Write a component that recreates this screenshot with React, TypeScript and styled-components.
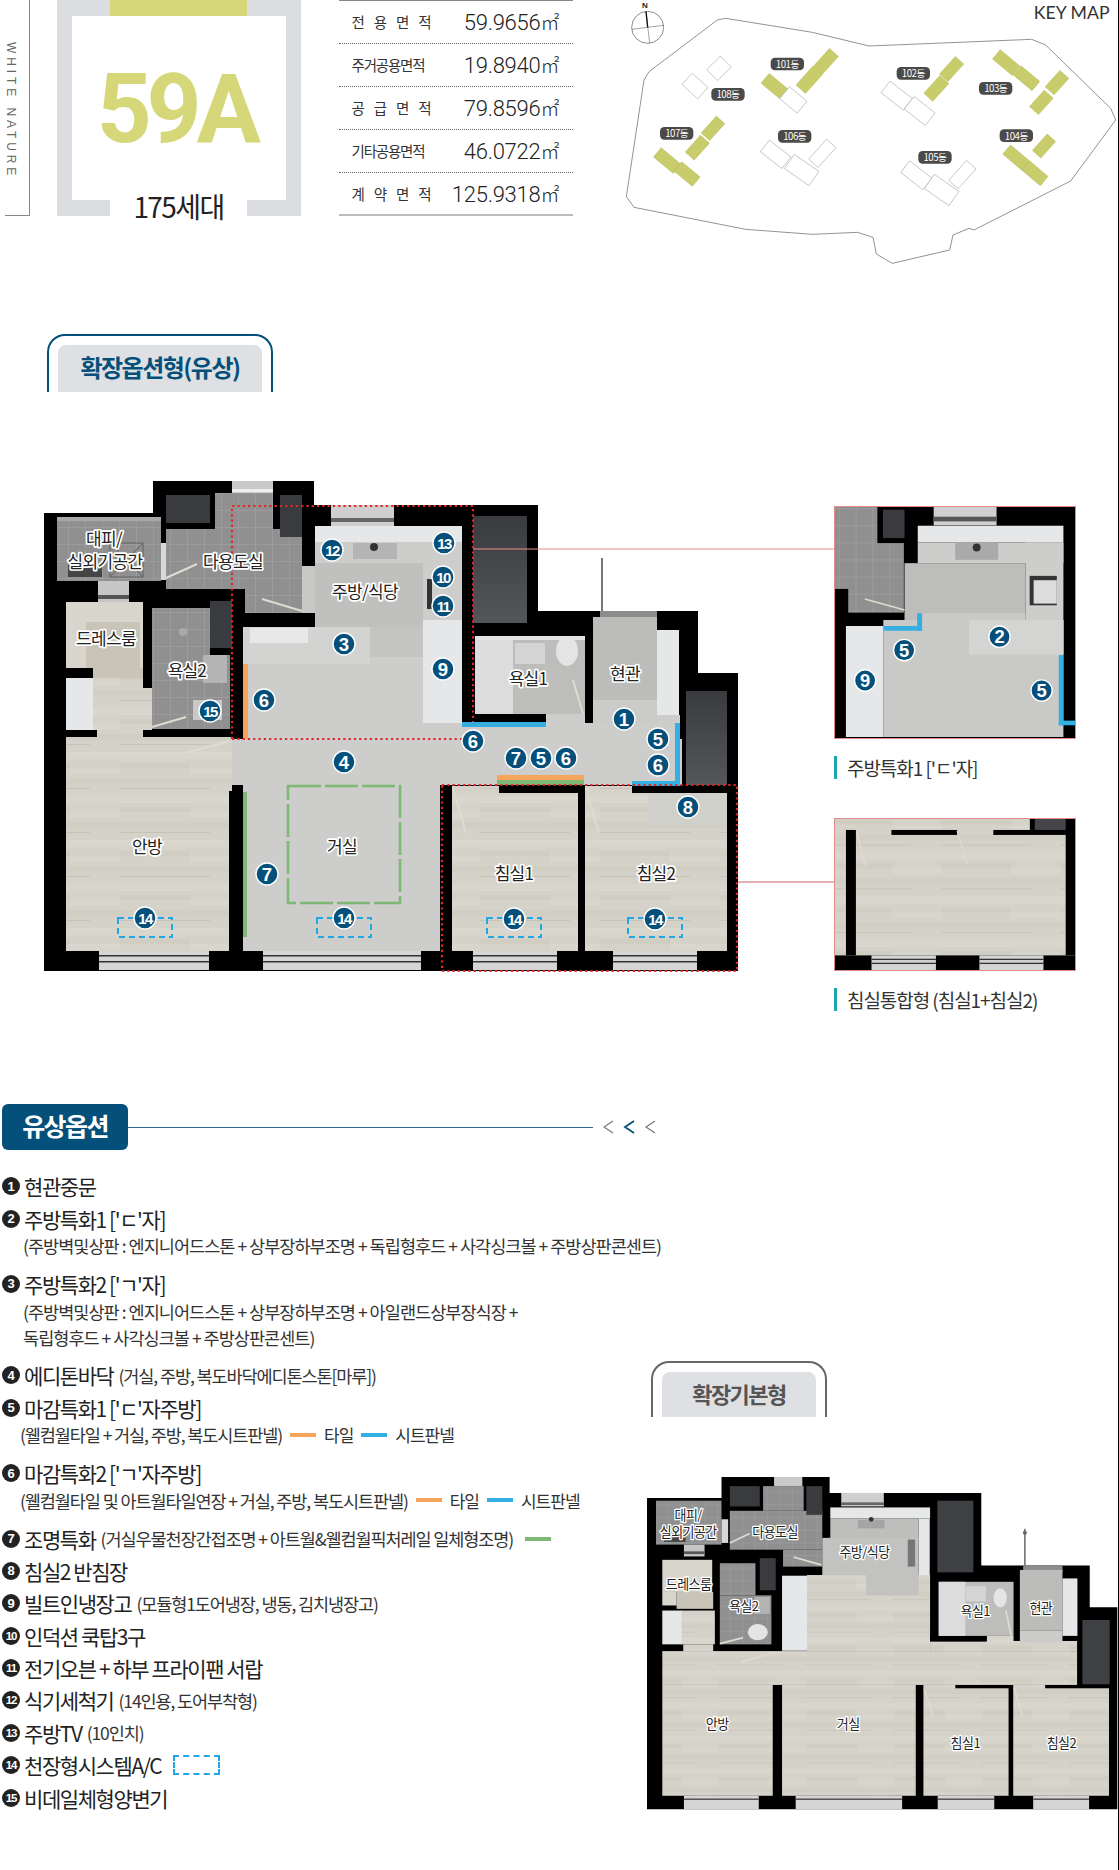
import React, { FunctionComponent } from 'react';
import styled, { createGlobalStyle } from 'styled-components';

const KR = '"Noto Sans CJK KR", "Noto Sans", sans-serif';
const NAVY = '#05507b';
const OLIVE = '#d5d778';
const BLUE = '#35aee2';
const ORANGE = '#f5a45c';
const GREEN = '#7db875';

const GlobalStyle = createGlobalStyle`
  html, body {
    margin: 0;
    padding: 0;
    background: #fff;
  }
  body {
    font-family: ${KR};
    color: #222;
  }
`;

const Page = styled.div`
  position: relative;
  box-sizing: border-box;
  width: 1119px;
  height: 1870px;
  overflow: hidden;
  border-right: 1px solid #000;
  background: #fff;
`;

/* ---------- top row ---------- */

const TopRow = styled.header`
  display: flex;
  height: 216px;
`;

const SideLabel = styled.div`
  box-sizing: border-box;
  width: 25px;
  height: 216px;
  margin-left: 5px;
  padding: 42px 11px 0 0;
  border-right: 1px solid #888;
  border-bottom: 1px solid #888;
  font-family: 'Liberation Sans', sans-serif;
  font-size: 12px;
  line-height: 14px;
  letter-spacing: 3.9px;
  color: #666;
  writing-mode: vertical-rl;
  white-space: nowrap;
`;

const TypeBox = styled.div`
  position: relative;
  box-sizing: border-box;
  display: flex;
  align-items: center;
  justify-content: center;
  width: 244px;
  height: 216px;
  margin-left: 27px;
  border: solid #dcdde0;
  border-width: 16px 15px;
`;

const TopNotch = styled.span`
  position: absolute;
  top: -16px;
  left: 38px;
  width: 137px;
  height: 16px;
  background: ${OLIVE};
`;

const Units = styled.span`
  position: absolute;
  bottom: -16px;
  left: 38px;
  width: 137px;
  height: 28px;
  background: #fff;
  font-size: 28px;
  line-height: 36px;
  letter-spacing: -1.6px;
  text-align: center;
  color: #222;
`;

const TypeName = styled.div`
  margin-top: 2px;
  margin-left: -5px;
  font-family: Roboto, sans-serif;
  font-size: 96px;
  font-weight: 700;
  line-height: 96px;
  letter-spacing: -5.2px;
  color: ${OLIVE};
`;

const AreaTable = styled.div`
  box-sizing: border-box;
  width: 235px;
  height: 216px;
  margin-left: 38px;
  border-top: 1px solid #888;
  border-bottom: 2px solid #bbb;
`;

const AreaRow = styled.div`
  box-sizing: border-box;
  display: flex;
  align-items: center;
  justify-content: space-between;
  height: 43px;
  padding: 0 15px 2px 13px;
  border-bottom: 1px dotted #666;
  &:last-child {
    border-bottom: 0;
  }
`;

const AreaLabel = styled.span<{ $spread?: boolean }>`
  width: 80px;
  font-size: 14.5px;
  letter-spacing: ${(p) => (p.$spread ? '0' : '-1.2px')};
  color: #333;
  white-space: nowrap;
  text-align: justify;
  text-align-last: justify;
`;

const AreaValue = styled.span`
  font-family: Roboto, sans-serif;
  font-size: 22px;
  font-weight: 300;
  letter-spacing: -0.25px;
  color: #222;
  white-space: nowrap;
`;

const Sqm = styled.span`
  font-family: ${KR};
  font-size: 19px;
  letter-spacing: -1.5px;
`;

const KeyMapSvg = styled.svg`
  display: block;
  flex: none;
  width: 519px;
  height: 280px;
  margin-left: 26px;
`;

/* ---------- tabs ---------- */

const Tab = styled.div<{ $color: string; $width: number; $height: number }>`
  box-sizing: border-box;
  width: ${(p) => p.$width}px;
  height: ${(p) => p.$height}px;
  padding: 9px 9px 0;
  border: 2px solid ${(p) => p.$color};
  border-bottom: 0;
  border-radius: 18px 18px 0 0;
`;

const TabFace = styled.div<{ $color: string; $size: number }>`
  box-sizing: border-box;
  display: flex;
  align-items: center;
  justify-content: center;
  height: 100%;
  padding-bottom: 4px;
  border-radius: 8px 8px 0 0;
  background: #dfe0e3;
  font-size: ${(p) => p.$size}px;
  font-weight: 700;
  letter-spacing: -1.5px;
  color: ${(p) => p.$color};
`;

const MainTab = styled(Tab)`
  margin: 118px 0 0 47px;
`;

/* ---------- plan row ---------- */

const PlanRow = styled.section`
  display: flex;
  margin-top: 89px;
`;

const MainPlanSvg = styled.svg`
  display: block;
  flex: none;
  width: 834px;
  height: 491px;
`;

const Insets = styled.div`
  display: flex;
  flex-direction: column;
  padding-top: 25px;
`;

const InsetSvg = styled.svg<{ $height: number }>`
  display: block;
  box-sizing: border-box;
  width: 242px;
  height: ${(p) => p.$height}px;
  border: 1px solid #e08a8a;
`;

const Caption = styled.div`
  display: flex;
  align-items: center;
  gap: 10px;
  height: 24px;
  margin-top: 16px;
  font-size: 19px;
  letter-spacing: -1.05px;
  color: #333;
  white-space: nowrap;
  &::before {
    content: '';
    width: 3px;
    height: 23px;
    background: #1ca5b0;
  }
  & + svg {
    margin-top: 39px;
  }
`;

const RoomText = styled.text<{ $size: number }>`
  font-family: ${KR};
  font-size: ${(p) => p.$size}px;
  letter-spacing: -0.04em;
  fill: #222;
  stroke: #fff;
  stroke-linejoin: round;
  paint-order: stroke;
  text-anchor: middle;
  dominant-baseline: central;
`;

const BadgeDisc = styled.circle`
  fill: ${NAVY};
  stroke: #fff;
`;

const BadgeText = styled.text`
  font-family: 'Liberation Sans', sans-serif;
  font-weight: 700;
  fill: #fff;
  text-anchor: middle;
  dominant-baseline: central;
`;

/* ---------- options ---------- */

const BottomRow = styled.section`
  display: flex;
  margin-top: 93px;
`;

const OptionColumn = styled.div`
  flex: none;
  width: 647px;
`;

const OptionHeader = styled.div`
  display: flex;
  align-items: center;
  width: 655px;
  height: 46px;
  padding-left: 2px;
`;

const OptionTitle = styled.h2`
  box-sizing: border-box;
  display: flex;
  align-items: center;
  justify-content: center;
  flex: none;
  width: 126px;
  height: 46px;
  margin: 0;
  padding-bottom: 4px;
  border-radius: 6px;
  background: ${NAVY};
  font-size: 25px;
  font-weight: 700;
  letter-spacing: -1.6px;
  color: #fff;
`;

const HeaderRule = styled.span`
  flex: 1;
  height: 1px;
  background: #2a6a8f;
`;

const Chevrons = styled.svg`
  display: block;
  flex: none;
  width: 54px;
  height: 16px;
  margin-left: 10px;
`;

const OptionList = styled.ol`
  margin: 20px 0 0;
  padding: 0 0 0 2px;
  list-style: none;
`;

const OptionRow = styled.li`
  white-space: nowrap;
`;

const OptionHead = styled.div`
  display: flex;
  align-items: center;
  gap: 4px;
  height: 32.4px;
  font-size: 21px;
  letter-spacing: -1.42px;
  color: #222;
`;

const Num = styled.span<{ $wide?: boolean }>`
  display: flex;
  align-items: center;
  justify-content: center;
  flex: none;
  width: 18px;
  height: 18px;
  border-radius: 50%;
  background: #222;
  font-family: 'Liberation Sans', sans-serif;
  font-size: ${(p) => (p.$wide ? '11.5px' : '13px')};
  font-weight: 700;
  letter-spacing: ${(p) => (p.$wide ? '-1.2px' : '0')};
  color: #fff;
`;

const Small = styled.span`
  margin-left: 1px;
  font-size: 17.5px;
  letter-spacing: -1.1px;
  color: #333;
`;

const SubLine = styled.div<{ $tight?: boolean }>`
  display: flex;
  align-items: center;
  height: 26px;
  padding-left: ${(p) => (p.$tight ? '18px' : '21px')};
  font-size: 17.5px;
  letter-spacing: ${(p) => (p.$tight ? '-1.1px' : '-0.97px')};
  color: #333;
  &:nth-child(2) {
    margin-top: -2px;
  }
  &:last-child {
    margin-bottom: 9px;
  }
`;

const Swatch = styled.span<{ $color: string }>`
  flex: none;
  width: 26px;
  height: 4px;
  margin: 0 8px 0 8px;
  background: ${(p) => p.$color};
`;

const SwatchText = styled.span`
  font-size: 17px;
  letter-spacing: -1px;
`;

const AcMark = styled.span`
  box-sizing: border-box;
  flex: none;
  width: 47px;
  height: 20px;
  margin-left: 8px;
  border: 2px dashed #22a7e6;
`;

const BasicColumn = styled.aside`
  flex: none;
  width: 471px;
  padding-top: 257px;
`;

const BasicTab = styled(Tab)`
  margin-left: 4px;
`;

const BasicPlanSvg = styled.svg`
  display: block;
  width: 471px;
  height: 333px;
  margin-top: 60px;
`;

/* ---------- drawing helpers ---------- */

type Box = [number, number, number, number, string];

const Boxes: FunctionComponent<{ list: Box[] }> = ({ list }) => (
  <>
    {list.map(([x, y, w, h, fill], i) => (
      <rect key={i} x={x} y={y} width={w} height={h} fill={fill} />
    ))}
  </>
);

const PlanDefs: FunctionComponent<{ id: string; k: number; tile: number }> = ({ id, k, tile }) => (
  <defs>
    <pattern id={`${id}-tile`} width={tile} height={tile} patternUnits="userSpaceOnUse" patternTransform={`scale(${k})`}>
      <rect width={tile} height={tile} fill="#909090" />
      <path d={`M0 0H${tile}M0 0V${tile}`} stroke="#a8a8a8" strokeWidth={0.9} fill="none" />
    </pattern>
    <pattern id={`${id}-wood`} width={120} height={44} patternUnits="userSpaceOnUse" patternTransform={`scale(${k})`}>
      <rect width={120} height={44} fill="#d5d2c9" />
      <rect y={4} width={120} height={7} fill="#d9d6ce" />
      <rect y={15} width={70} height={5} fill="#d0cdc3" />
      <rect x={70} y={20} width={50} height={6} fill="#d9d6cd" />
      <rect y={30} width={120} height={6} fill="#d1cec4" />
      <rect y={40} width={90} height={1} fill="#c6c3b8" />
    </pattern>
    <linearGradient id={`${id}-shaft`} x1="0" y1="0" x2="0" y2="1">
      <stop offset="0" stopColor="#3a3b3e" />
      <stop offset="1" stopColor="#55565a" />
    </linearGradient>
  </defs>
);

const Badge: FunctionComponent<{ x: number; y: number; n: number; r: number; s?: number }> = ({ x, y, n, r, s = 1 }) => (
  <g>
    <BadgeDisc cx={x} cy={y} r={r} strokeWidth={1.4 * s} />
    <BadgeText x={x} y={y} fontSize={(n > 9 ? 15 : 18.5) * s} letterSpacing={n > 9 ? -1.6 * s : 0}>
      {n}
    </BadgeText>
  </g>
);

const Room: FunctionComponent<{ x: number; y: number; size: number; children: React.ReactNode }> = ({ x, y, size, children }) => (
  <RoomText x={x} y={y} $size={size} strokeWidth={size / 5}>
    {children}
  </RoomText>
);

const Doors: FunctionComponent<{ list: number[][]; width: number }> = ({ list, width }) => (
  <>
    {list.map(([a, b, c, d], i) => (
      <line key={i} x1={a} y1={b} x2={c} y2={d} stroke="#dfdbd0" strokeWidth={width} />
    ))}
  </>
);

/* ---------- key map ---------- */

const blocks: [number, number, number, number, number, boolean][] = [
  [680, 185, 74, 36, -48, true], [630, 240, 74, 38, -48, true], [526, 258, 72, 38, 40, true], [583, 300, 68, 46, 40, false],
  [1058, 207, 70, 34, -48, true], [1012, 265, 72, 36, -48, true], [893, 287, 85, 44, 38, false], [962, 333, 80, 48, 38, false],
  [1222, 188, 78, 36, 40, true], [1283, 235, 72, 36, 40, true], [1374, 248, 66, 36, -48, true], [1327, 307, 66, 36, -48, true],
  [1335, 438, 66, 34, -48, true], [1252, 473, 76, 36, 40, true], [1308, 520, 72, 36, 40, true],
  [952, 526, 85, 44, 38, false], [1028, 570, 90, 52, 35, false], [1090, 524, 80, 38, -48, false],
  [530, 463, 82, 44, 38, false], [608, 510, 90, 52, 35, false], [670, 460, 80, 38, -48, false],
  [342, 385, 68, 34, -48, true], [295, 443, 68, 36, -48, true], [205, 482, 78, 36, 40, true], [264, 522, 72, 36, 40, true],
  [360, 205, 58, 46, -45, false], [288, 258, 64, 46, 42, false],
];

const blockTags: [string, number, number][] = [
  ['101동', 565, 192], ['102동', 943, 220], ['103동', 1190, 265], ['104동', 1252, 407],
  ['105동', 1008, 472], ['106동', 587, 409], ['107동', 233, 400], ['108동', 387, 283],
];

const KeyMap = () => (
  <KeyMapSvg viewBox="0 0 1557 840">
    <path
      d="M380 55 355 60 150 215 135 240 82 590 105 622 440 688 640 703 775 697 822 712 832 762 880 790 1052 750 1062 705 1110 685 1125 690 1415 543 1550 360 1535 325 1340 135 1298 118 810 138 640 97Z"
      fill="#fff"
      stroke="#777"
      strokeWidth={2.4}
    />
    <circle cx={146} cy={82} r={48} fill="none" stroke="#555" strokeWidth={2} />
    <path d="M98 88 194 76M141 34 152 130" stroke="#555" strokeWidth={1.6} fill="none" />
    <path d="M141 34 146 82" stroke="#111" strokeWidth={4} />
    <text x={138} y={24} fontFamily="Liberation Sans" fontSize={24} fontWeight={700} textAnchor="middle" fill="#222">N</text>
    {blocks.map(([x, y, w, h, a, green], i) => (
      <rect
        key={i}
        x={x - w / 2}
        y={y - h / 2}
        width={w}
        height={h}
        transform={`rotate(${a} ${x} ${y})`}
        fill={green ? '#c8cc6a' : '#fff'}
        stroke={green ? '#b5b95a' : '#999'}
        strokeWidth={1.5}
      />
    ))}
    {blockTags.map(([label, x, y]) => (
      <g key={label}>
        <rect x={x - 50} y={y - 19} width={100} height={38} rx={13} fill="#4a4a4a" />
        <text x={x} y={y} fontFamily={KR} fontSize={29} letterSpacing={-1.5} textAnchor="middle" dominantBaseline="central" fill="#fff">
          {label}
        </text>
      </g>
    ))}
    <text x={1418} y={56} fontFamily="Lato, sans-serif" fontSize={53} textAnchor="middle" fill="#333">KEY MAP</text>
  </KeyMapSvg>
);

/* ---------- main plan ---------- */

const FLOOR = '#cdcdcb';
const WHITE = '#e6e7e8';
const BLACK = '#000';

const mainBoxes: Box[] = [
  [57, 517, 104, 64, 'url(#m-tile)'], [57, 517, 104, 4, '#a8a8a8'], [68, 565, 34, 12, '#454545'], [161, 543, 5, 37, '#d8d8d8'],
  [215, 493, 58, 36, 'url(#m-tile)'], [166, 529, 136, 60, 'url(#m-tile)'], [245, 589, 57, 24, 'url(#m-tile)'],
  [232, 481, 41, 12, '#c9c9c9'], [232, 489, 41, 3, '#eee'],
  [166, 495, 44, 28, '#3a3b3e'], [280, 495, 22, 42, '#3a3b3e'],
  [331, 505, 63, 21, '#cfcfcf'], [331, 518, 63, 4, '#666'],
  [315, 526, 147, 16, WHITE], [315, 542, 147, 78, '#cdcdcc'], [315, 563, 108, 64, '#c0c0bf'], [302, 566, 13, 47, '#c8c8c6'],
  [353, 543, 44, 16, '#b4b4b4'], [427, 579, 5, 30, '#333'],
  [243, 627, 219, 112, FLOOR], [315, 627, 108, 30, '#c4c4c3'], [243, 627, 127, 37, '#d3d3d2'], [250, 628, 58, 15, '#e8e8e8'],
  [423, 620, 39, 103, WHITE], [243, 664, 5, 75, ORANGE],
  [66, 602, 77, 66, '#d8d5cc'], [86, 622, 54, 46, '#c8c4b8'], [93, 668, 50, 10, '#c8c4b8'],
  [98, 581, 31, 21, '#c6c6c6'], [98, 595, 31, 4, '#555'],
  [66, 678, 27, 52, WHITE], [93, 678, 50, 52, 'url(#m-wood)'], [143, 688, 9, 42, 'url(#m-wood)'], [97, 730, 46, 7, 'url(#m-wood)'],
  [152, 608, 58, 47, 'url(#m-tile)'], [152, 655, 78, 74, 'url(#m-tile)'], [210, 601, 22, 47, '#3a3b3e'],
  [203, 655, 24, 28, '#b4b4b4'], [193, 700, 29, 20, '#c8c8c8'],
  [66, 737, 166, 54, 'url(#m-wood)'], [66, 791, 163, 160, 'url(#m-wood)'],
  [232, 739, 450, 46, FLOOR], [243, 785, 197, 166, FLOOR], [462, 723, 218, 16, FLOOR], [546, 714, 39, 9, FLOOR],
  [473, 516, 54, 107, 'url(#m-shaft)'],
  [475, 636, 110, 78, '#bdbdbc'], [475, 636, 38, 78, '#dcdcdc'], [515, 643, 30, 21, '#d4d4d4'], [475, 636, 110, 4, '#e2e2e2'],
  [600, 611, 57, 8, '#8d8d8d'], [593, 617, 64, 106, '#bcbcbb'], [593, 700, 64, 23, '#cbcbc9'], [657, 630, 22, 85, WHITE], [657, 715, 23, 8, FLOOR],
  [686, 691, 41, 94, 'url(#m-shaft)'],
  [601, 558, 2, 53, '#777'],
  [452, 786, 126, 165, 'url(#m-wood)'], [585, 786, 142, 165, 'url(#m-wood)'], [499, 786, 85, 7, BLACK], [632, 786, 95, 7, BLACK], [648, 793, 79, 32, '#cfd0c9'],
  [462, 722, 84, 5, BLUE], [675, 723, 5, 62, BLUE], [632, 781, 48, 5, BLUE],
  [497, 775, 87, 5, ORANGE], [497, 780, 87, 5, GREEN], [243, 792, 4, 145, GREEN],
  [99, 951, 110, 19, '#d5d5d5'], [263, 951, 158, 19, '#d5d5d5'], [473, 951, 84, 19, '#d5d5d5'], [613, 951, 84, 19, '#d5d5d5'],
  [99, 955, 110, 1.5, '#333'], [263, 955, 158, 1.5, '#333'], [473, 955, 84, 1.5, '#333'], [613, 955, 84, 1.5, '#333'],
  [99, 961, 110, 1.5, '#333'], [263, 961, 158, 1.5, '#333'], [473, 961, 84, 1.5, '#333'], [613, 961, 84, 1.5, '#333'],
];

const mainDoors = [
  [166, 578, 197, 564], [262, 599, 302, 611], [152, 727, 186, 717], [230, 741, 185, 753],
  [573, 680, 583, 714], [453, 788, 466, 833], [586, 788, 599, 833],
];

const mainBadges: [number, number, number][] = [
  [13, 444, 543], [12, 332, 550], [10, 443, 577], [11, 443, 606], [3, 344, 644], [9, 443, 669], [6, 264, 700], [15, 210, 711],
  [6, 473, 741], [1, 624, 719], [5, 658, 739], [6, 658, 765], [7, 516, 758], [5, 541, 758], [6, 566, 758], [8, 688, 807],
  [14, 514, 919], [14, 655, 919], [4, 344, 762], [7, 267, 874], [14, 145, 918], [14, 344, 918],
];

const mainRooms: [string, number, number][] = [
  ['대피/', 104, 537], ['실외기공간', 105, 560], ['다용도실', 233, 560], ['주방/식당', 365, 590], ['드레스룸', 106, 637],
  ['욕실2', 187, 669], ['욕실1', 528, 677], ['현관', 625, 672], ['침실1', 514, 872], ['침실2', 656, 872], ['안방', 147, 845], ['거실', 342, 845],
];

const acSpots = [118, 317, 487, 628];

const MainPlan = () => (
  <MainPlanSvg viewBox="0 481 834 491">
    <PlanDefs id="m" k={1} tile={17} />
    <path d="M44 513H153V481H314V505H538V611H698V673H738V971H44Z" fill={BLACK} />
    <Boxes list={mainBoxes} />
    <path d="M110 543H143V577H110ZM110 543 143 577M143 543 110 577" stroke="#555" strokeWidth={0.8} fill="none" />
    <circle cx={374} cy={547} r={4} fill="#333" />
    <ellipse cx={567} cy={651} rx={11} ry={15} fill="#e4e4e4" />
    <circle cx={183} cy={632} r={4} fill="#aaa" />
    <Doors list={mainDoors} width={2} />
    <path d="M232 739V506H473V722M232 739H465" fill="none" stroke="#e0252b" strokeWidth={2.2} strokeDasharray="2.2 3.1" />
    <rect x={442} y={785} width={295} height={186} fill="none" stroke="#e0252b" strokeWidth={2.2} strokeDasharray="2.2 3.1" />
    <path d="M473 549H834" stroke="#e98a8a" strokeWidth={1.2} />
    <path d="M738 882H834" stroke="#c86464" strokeWidth={1.2} />
    <rect x={288} y={786} width={112} height={117} fill="none" stroke={GREEN} strokeWidth={2.6} strokeDasharray="33 4" />
    {acSpots.map((x) => (
      <rect key={x} x={x} y={918} width={54} height={19} fill="none" stroke="#22a7e6" strokeWidth={2} strokeDasharray="6 4" />
    ))}
    {mainRooms.map(([label, x, y]) => (
      <Room key={label} x={x} y={y} size={17}>{label}</Room>
    ))}
    {mainBadges.map(([n, x, y], i) => (
      <Badge key={i} n={n} x={x} y={y} r={11} />
    ))}
  </MainPlanSvg>
);

/* ---------- insets ---------- */

const kitchenBoxes: Box[] = [
  [40, 47, 725, 691, BLACK],
  [40, 47, 128, 245, 'url(#a-tile)'], [80, 155, 168, 208, 'url(#a-tile)'], [185, 55, 65, 85, '#3a3b3e'],
  [338, 47, 190, 55, '#cfcfcf'], [338, 76, 190, 14, '#555'],
  [250, 215, 365, 170, '#bdbdbc'], [290, 103, 440, 50, WHITE], [290, 153, 440, 62, '#cdcdcc'], [615, 153, 115, 335, '#cdcdcc'],
  [186, 385, 544, 350, '#c9c9c8'], [303, 365, 312, 25, '#c9c9c8'], [445, 385, 285, 103, '#d4d4d3'],
  [403, 153, 130, 52, '#aaaaaa'], [628, 253, 82, 88, '#333'], [640, 266, 70, 70, '#dcdcdc'],
  [73, 403, 113, 332, WHITE],
  [288, 365, 15, 52, BLUE], [187, 403, 116, 14, BLUE], [716, 490, 14, 210, BLUE], [716, 686, 49, 14, BLUE],
];

const KitchenInset = () => (
  <InsetSvg $height={233} viewBox="40 47 725 691" preserveAspectRatio="none">
    <PlanDefs id="a" k={3} tile={17} />
    <Boxes list={kitchenBoxes} />
    <circle cx={468} cy={168} r={12} fill="#333" />
    <Doors list={[[130, 322, 250, 355]]} width={5} />
    <Badge n={2} x={537} y={435} r={32} s={3} />
    <Badge n={5} x={249} y={475} r={32} s={3} />
    <Badge n={9} x={131} y={566} r={32} s={3} />
    <Badge n={5} x={664} y={596} r={32} s={3} />
  </InsetSvg>
);

const bedBoxes: Box[] = [
  [40, 967, 723, 455, 'url(#b-wood)'],
  [73, 1000, 30, 378, BLACK], [210, 1000, 198, 15, BLACK], [517, 1000, 220, 15, BLACK], [627, 967, 110, 33, BLACK], [642, 967, 95, 33, '#45464a'],
  [735, 967, 28, 411, BLACK], [40, 1378, 723, 44, BLACK],
  [150, 1378, 194, 44, '#d5d5d5'], [475, 1378, 193, 44, '#d5d5d5'],
  [150, 1388, 194, 4, '#333'], [475, 1388, 193, 4, '#333'], [150, 1400, 194, 4, '#333'], [475, 1400, 193, 4, '#333'],
];

const BedInset = () => (
  <InsetSvg $height={153} viewBox="40 967 723 455" preserveAspectRatio="none">
    <PlanDefs id="b" k={3} tile={17} />
    <Boxes list={bedBoxes} />
    <Doors list={[[105, 1003, 133, 1110], [408, 1003, 438, 1102]]} width={4} />
  </InsetSvg>
);

/* ---------- basic plan ---------- */

const basicBoxes: Box[] = [
  [78, 475, 197, 130, 'url(#c-tile)'], [102, 575, 65, 22, '#444'], [275, 530, 20, 70, '#d8d8d8'],
  [400, 432, 122, 73, 'url(#c-tile)'], [300, 505, 278, 115, 'url(#c-tile)'], [460, 620, 118, 50, 'url(#c-tile)'],
  [300, 432, 90, 60, '#3a3b3e'], [530, 432, 48, 85, '#3a3b3e'], [433, 405, 85, 27, '#c9c9c9'],
  [635, 452, 128, 40, '#cfcfcf'], [635, 480, 128, 8, '#666'],
  [602, 495, 300, 33, WHITE], [868, 528, 33, 225, WHITE], [602, 528, 266, 60, '#bebebd'], [578, 585, 290, 110, '#c2c2c0'],
  [685, 532, 80, 25, '#a5a5a5'], [835, 590, 22, 80, '#777'],
  [532, 695, 370, 225, 'url(#c-wood)'], [710, 690, 158, 65, '#c2c2c0'], [457, 697, 75, 222, WHITE],
  [97, 920, 1247, 100, 'url(#c-wood)'], [97, 1020, 332, 328, 'url(#c-wood)'], [457, 1020, 402, 328, 'url(#c-wood)'],
  [882, 1020, 96, 12, 'url(#c-wood)'], [882, 1030, 256, 318, 'url(#c-wood)'],
  [1152, 1020, 96, 12, 'url(#c-wood)'], [1152, 1030, 288, 318, 'url(#c-wood)'],
  [902, 890, 442, 30, 'url(#c-wood)'], [902, 875, 170, 15, BLACK], [1150, 875, 22, 15, BLACK],
  [1073, 875, 80, 20, 'url(#c-wood)'], [902, 890, 170, 2, BLACK],
  [924, 475, 108, 212, '#3f4044'], [928, 715, 225, 160, '#bdbdbc'], [928, 715, 80, 160, '#dcdcdc'], [1010, 728, 60, 45, '#d4d4d4'],
  [1182, 667, 118, 20, '#8d8d8d'], [1172, 680, 128, 180, '#bcbcbb'], [1172, 860, 128, 35, '#cbcbc9'], [1300, 705, 45, 170, WHITE],
  [1302, 878, 42, 12, BLACK], [1360, 828, 82, 190, '#3f4044'],
  [97, 650, 150, 95, '#d8d5cc'], [140, 745, 110, 50, '#c8c4b8'], [97, 745, 43, 40, '#d8d5cc'], [162, 605, 62, 35, '#c6c6c6'], [162, 625, 62, 8, '#555'],
  [97, 800, 60, 100, WHITE], [155, 800, 100, 100, 'url(#c-wood)'], [160, 900, 90, 20, 'url(#c-wood)'],
  [270, 660, 107, 95, 'url(#c-tile)'], [270, 755, 155, 145, 'url(#c-tile)'], [390, 645, 48, 95, '#3a3b3e'], [375, 760, 45, 50, '#b4b4b4'],
  [162, 1348, 225, 40, '#d5d5d5'], [498, 1348, 320, 40, '#d5d5d5'], [925, 1348, 170, 40, '#d5d5d5'], [1212, 1348, 168, 40, '#d5d5d5'],
  [162, 1356, 225, 4, '#444'], [498, 1356, 320, 4, '#444'], [925, 1356, 170, 4, '#444'], [1212, 1356, 168, 4, '#444'],
];

const basicRooms: [string, number, number][] = [
  ['대피/', 175, 517], ['실외기공간', 175, 566], ['다용도실', 436, 565], ['주방/식당', 705, 625], ['드레스룸', 176, 720],
  ['욕실2', 342, 784], ['욕실1', 1038, 800], ['현관', 1235, 790], ['안방', 262, 1135], ['거실', 656, 1135], ['침실1', 1008, 1190], ['침실2', 1297, 1190],
];

const basicDoors = [
  [300, 600, 360, 572], [492, 642, 575, 665], [270, 898, 340, 880], [335, 952, 428, 925],
  [1130, 800, 1148, 885], [885, 1035, 912, 1115], [1155, 1030, 1180, 1115],
];

const BasicPlan = () => (
  <BasicPlanSvg viewBox="51 405 1416 985" preserveAspectRatio="none">
    <PlanDefs id="c" k={2.2} tile={17} />
    <path d="M51 467H275V405H600V452H1056V667H1382V790H1465V1388H51Z" fill={BLACK} />
    <Boxes list={basicBoxes} />
    <ellipse cx={1113} cy={762} rx={20} ry={28} fill="#e4e4e4" />
    <ellipse cx={384} cy={864} rx={30} ry={24} fill="#e4e4e4" />
    <circle cx={725} cy={530} r={7} fill="#333" />
    <path d="M1187 558V667" stroke="#777" strokeWidth={5} />
    <circle cx={1187} cy={570} r={6} fill="#666" />
    <Doors list={basicDoors} width={5} />
    {basicRooms.map(([label, x, y]) => (
      <Room key={label} x={x} y={y} size={39}>{label}</Room>
    ))}
  </BasicPlanSvg>
);

/* ---------- page ---------- */

const areas = [
  { label: '전용면적', value: '59.9656', spread: true },
  { label: '주거공용면적', value: '19.8940' },
  { label: '공급면적', value: '79.8596', spread: true },
  { label: '기타공용면적', value: '46.0722' },
  { label: '계약면적', value: '125.9318', spread: true },
];

const OptionItem: FunctionComponent<{
  n: number;
  title: string;
  note?: string;
  tail?: React.ReactNode;
  subs?: React.ReactNode[];
  tight?: boolean;
}> = ({ n, title, note, tail, subs, tight }) => (
  <OptionRow>
    <OptionHead>
      <Num $wide={n > 9}>{n}</Num>
      <span>{title}</span>
      {note && <Small>{note}</Small>}
      {tail}
    </OptionHead>
    {subs &&
      subs.map((line, i) => (
        <SubLine key={i} $tight={tight}>
          {line}
        </SubLine>
      ))}
  </OptionRow>
);

const App = () => {
  return (
    <Page>
      <GlobalStyle />
      <TopRow>
        <SideLabel>WHITE NATURE</SideLabel>
        <TypeBox>
          <TopNotch />
          <TypeName>59A</TypeName>
          <Units>175세대</Units>
        </TypeBox>
        <AreaTable>
          {areas.map((a) => (
            <AreaRow key={a.label}>
              <AreaLabel $spread={a.spread}>
                {a.spread ? a.label.split('').join(' ') : a.label}
              </AreaLabel>
              <AreaValue>
                {a.value}
                <Sqm>㎡</Sqm>
              </AreaValue>
            </AreaRow>
          ))}
        </AreaTable>
        <KeyMap />
      </TopRow>

      <MainTab $color={NAVY} $width={226} $height={58}>
        <TabFace $color={NAVY} $size={24}>확장옵션형(유상)</TabFace>
      </MainTab>

      <PlanRow>
        <MainPlan />
        <Insets>
          <KitchenInset />
          <Caption>주방특화1 ['ㄷ'자]</Caption>
          <BedInset />
          <Caption>침실통합형 (침실1+침실2)</Caption>
        </Insets>
      </PlanRow>

      <BottomRow>
        <OptionColumn>
          <OptionHeader>
            <OptionTitle>유상옵션</OptionTitle>
            <HeaderRule />
            <Chevrons viewBox="0 0 54 16">
              <path d="M10 2 1 8 10 14" fill="none" stroke="#777" strokeWidth={1.2} />
              <path d="M31 2 22 8 31 14" fill="none" stroke={NAVY} strokeWidth={1.8} />
              <path d="M52 2 43 8 52 14" fill="none" stroke="#777" strokeWidth={1.2} />
            </Chevrons>
          </OptionHeader>
          <OptionList>
            <OptionItem n={1} title="현관중문" />
            <OptionItem
              n={2}
              title="주방특화1 ['ㄷ'자]"
              subs={['(주방벽및상판 : 엔지니어드스톤 + 상부장하부조명 + 독립형후드 + 사각싱크볼 + 주방상판콘센트)']}
            />
            <OptionItem
              n={3}
              title="주방특화2 ['ㄱ'자]"
              subs={['(주방벽및상판 : 엔지니어드스톤 + 상부장하부조명 + 아일랜드상부장식장 +', '독립형후드 + 사각싱크볼 + 주방상판콘센트)']}
            />
            <OptionItem n={4} title="에디톤바닥" note="(거실, 주방, 복도바닥에디톤스톤[마루])" />
            <OptionItem
              n={5}
              title="마감특화1 ['ㄷ'자주방]"
              tight
              subs={[
                <>
                  (웰컴월타일 + 거실, 주방, 복도시트판넬)
                  <Swatch $color={ORANGE} />
                  <SwatchText>타일</SwatchText>
                  <Swatch $color={BLUE} />
                  <SwatchText>시트판넬</SwatchText>
                </>,
              ]}
            />
            <OptionItem
              n={6}
              title="마감특화2 ['ㄱ'자주방]"
              tight
              subs={[
                <>
                  (웰컴월타일 및 아트월타일연장 + 거실, 주방, 복도시트판넬)
                  <Swatch $color={ORANGE} />
                  <SwatchText>타일</SwatchText>
                  <Swatch $color={BLUE} />
                  <SwatchText>시트판넬</SwatchText>
                </>,
              ]}
            />
            <OptionItem
              n={7}
              title="조명특화"
              note="(거실우물천장간접조명 + 아트월&웰컴월픽처레일 일체형조명)"
              tail={<Swatch $color={GREEN} />}
            />
            <OptionItem n={8} title="침실2 반침장" />
            <OptionItem n={9} title="빌트인냉장고" note="(모듈형1도어냉장, 냉동, 김치냉장고)" />
            <OptionItem n={10} title="인덕션 쿡탑3구" />
            <OptionItem n={11} title="전기오븐 + 하부 프라이팬 서랍" />
            <OptionItem n={12} title="식기세척기" note="(14인용, 도어부착형)" />
            <OptionItem n={13} title="주방TV" note="(10인치)" />
            <OptionItem n={14} title="천장형시스템A/C" tail={<AcMark />} />
            <OptionItem n={15} title="비데일체형양변기" />
          </OptionList>
        </OptionColumn>
        <BasicColumn>
          <BasicTab $color="#666" $width={176} $height={56}>
            <TabFace $color="#555" $size={22}>확장기본형</TabFace>
          </BasicTab>
          <BasicPlan />
        </BasicColumn>
      </BottomRow>
    </Page>
  );
};

export default App;
